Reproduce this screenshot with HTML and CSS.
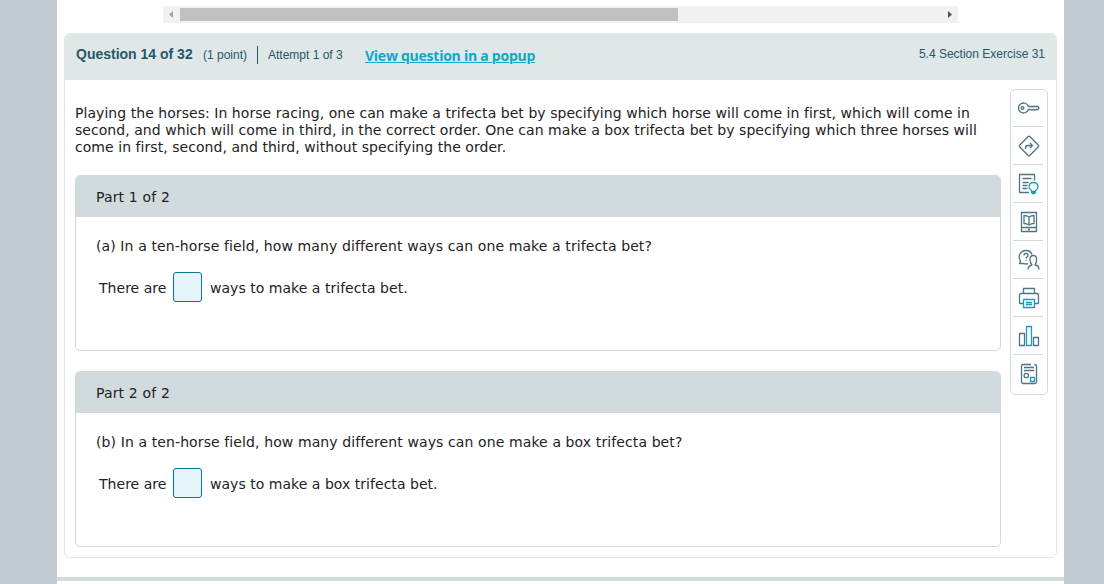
FILE: index.html
```html
<!DOCTYPE html>
<html lang="en">
    <head>
        <meta charset="UTF-8" />
        <meta name="viewport" content="width=device-width, initial-scale=1.0" />
        <title>Question 14 of 32</title>
        <link rel="stylesheet" href="styles.css">
    </head>
    <body>
        <main class="page">
            <div class="scrollbar">
                <svg class="arrow" width="17" height="17" viewBox="0 0 17 17"><path d="M10 5v7L6 8.500z" fill="#a3a3a3"/></svg>
                <div class="thumb"></div>
                <svg class="arrow arrow-right" width="17" height="17" viewBox="0 0 17 17"><path d="M7 5v7l4-3.500z" fill="#505050"/></svg>
            </div>
            <section class="question">
                <header class="question-header">
                    <h1 class="question-title">Question 14 of 32</h1>
                    <span class="points">(1 point)</span>
                    <span class="attempt">Attempt 1 of 3</span>
                    <a class="popup-link" href="#">View question in a popup</a>
                    <span class="exercise">5.4 Section Exercise 31</span>
                </header>
                <div class="question-body">
                    <div class="content">
                        <p class="intro">
                            Playing the horses: In horse racing, one can make a trifecta bet by specifying which horse will come in first, which will come in<br>
                            second, and which will come in third, in the correct order. One can make a box trifecta bet by specifying which three horses will<br>
                            come in first, second, and third, without specifying the order.
                        </p>
                        <section class="part">
                            <h2 class="part-title">Part 1 of 2</h2>
                            <p class="part-question">(a) In a ten-horse field, how many different ways can one make a trifecta bet?</p>
                            <div class="answer">
                                <label for="answer-a">There are</label>
                                <input class="answer-input" id="answer-a" type="text">
                                <span>ways to make a trifecta bet.</span>
                            </div>
                        </section>
                        <section class="part">
                            <h2 class="part-title">Part 2 of 2</h2>
                            <p class="part-question">(b) In a ten-horse field, how many different ways can one make a box trifecta bet?</p>
                            <div class="answer">
                                <label for="answer-b">There are</label>
                                <input class="answer-input" id="answer-b" type="text">
                                <span>ways to make a box trifecta bet.</span>
                            </div>
                        </section>
                    </div>
                    <nav class="tools">
                        <a class="tool" href="#">
                            <svg class="icon" viewBox="0 0 22 22"><path d="M10.300 9.500a5 5 0 1 0 0 3H13l1 .8 1-.8h1l1 .8 1-.8h2q1.500-1.500 0-3z"/><circle cx="4.500" cy="11" r="1.300"/></svg>
                        </a>
                        <a class="tool" href="#">
                            <svg class="icon" viewBox="0 0 22 22"><path d="M10 1.800q1-1 2 0l8.200 8.200q1 1 0 2L12 20.200q-1 1-2 0L1.800 12q-1-1 0-2z"/><path d="M7.500 14v-1q0-2.500 2.500-2.500h4.500M12 8l2.500 2.500L12 13"/></svg>
                        </a>
                        <a class="tool" href="#">
                            <svg class="icon" viewBox="0 0 22 22"><path d="M16.500 7.500V2q0-.5-.5-.5H2q-.5 0-.5.5v17q0 .5.5.5h9M4.500 5.500h9M4.500 9.500h6M4.500 12.500h5M4.500 15.500h5"/><path class="accent" d="M13.500 17.500q-2.500-1.500-2.500-4 .5-4 4.500-4t4.500 4q0 2.500-2.500 4v2h-4zM13.500 18.500h4M14 20.500h3"/></svg>
                        </a>
                        <a class="tool" href="#">
                            <svg class="icon" viewBox="0 0 22 22"><path d="M3.500 1.500h15v19h-15zM3.500 16.500h15M10 18.500h2M11 6Q9 4.500 6 4.500v8q3 0 5 1.500 2-1.500 5-1.500v-8q-3 0-5 1.500zM11 6v8"/></svg>
                        </a>
                        <a class="tool" href="#">
                            <svg class="icon" viewBox="0 0 22 22"><path d="M10 14.500q-2 1-4.500 0h-4l1-2.500Q.500 9.500 1.500 6q2-4.500 6.500-4.500t6 4"/><path d="M6 6.500q0-2 2-2t2 2q0 1-1 1.500t-1 1.500M8 11v1"/><path d="M10 20.500q0-3.500 4-4.500-2-2.500-2-5.500 0-4 3.300-4t3.300 4q0 3-1.600 5.500 4 .5 4 4.500"/></svg>
                        </a>
                        <a class="tool" href="#">
                            <svg class="icon" viewBox="0 0 22 22"><path d="M5.500 6.500v-5h11v5M5 16.500H2q-.5 0-.5-.5V8q0-1.500 1.500-1.500h16q1.500 0 1.500 1.500v8q0 .5-.5.5h-3"/><path class="accent" d="M5.500 12.500h11v8h-11zM8 15.500h6M8 17.500h6"/></svg>
                        </a>
                        <a class="tool" href="#">
                            <svg class="icon" viewBox="0 0 22 22"><path d="M1.500 8.500h5v12h-5zM15.500 12.500h5v8h-5z"/><path class="accent" d="M8.500 1.500h5v19h-5z"/></svg>
                        </a>
                        <a class="tool" href="#">
                            <svg class="icon" viewBox="0 0 22 22"><path d="M13 1.500H5q-1.500 0-1.500 1.500v16q0 1.500 1.500 1.500h12q1.500 0 1.500-1.500V3q0-1.500-2-1.500M6 4.500h10M6 7.500h10"/><circle cx="8.300" cy="12.500" r="2.200"/><path class="accent" d="M12.500 14.500h4v4h-4z"/></svg>
                        </a>
                    </nav>
                </div>
            </section>
            <div class="page-divider"></div>
        </main>
    </body>
</html>
```
FILE: styles.css
```css
* {
    margin: 0;
    padding: 0;
    box-sizing: border-box;
}
body {
    height: 584px;
    overflow: hidden;
    background: #c1cdd3;
    color: #222;
    font-family: Verdana, "DejaVu Sans", sans-serif;
    font-size: 14px;
    line-height: 17px;
}
.page {
    width: 1007px;
    height: 584px;
    margin-left: 57px;
    padding-top: 6px;
    background: #fff;
}
.scrollbar {
    display: flex;
    align-items: center;
    width: 795px;
    height: 17px;
    margin-left: 106px;
    background: #f1f1f1;
}
.thumb {
    width: 498px;
    height: 13px;
    background: #c1c1c1;
}
.arrow-right {
    margin-left: auto;
}
.question {
    width: 993px;
    height: 525px;
    margin: 10px 0 0 7px;
    border: 1px solid #dfe7e8;
    border-radius: 6px;
    overflow: hidden;
}
.question-header {
    display: flex;
    height: 46px;
    padding: 12px 11px 0;
    background: #dfe7e8;
    color: #265766;
    font-family: Arial, "Liberation Sans", sans-serif;
    font-size: 12px;
    line-height: 18px;
    white-space: nowrap;
}
.question-title {
    width: 127px;
    font-size: 14px;
    line-height: 17px;
}
.points {
    width: 55px;
    height: 18px;
    border-right: 1px solid #265766;
}
.attempt {
    width: 97px;
    padding-left: 10px;
}
.popup-link {
    margin-left: 10px;
    color: #0ea8c6;
    font-family: "Open Sans", sans-serif;
    font-size: 14px;
    font-weight: 700;
    line-height: 20px;
    letter-spacing: -0.25px;
}
.exercise {
    margin-left: auto;
    line-height: 16px;
}
.question-body {
    display: flex;
    gap: 9px;
    padding: 9px 8px 0 10px;
}
.content {
    width: 926px;
    padding-top: 16px;
}
.intro {
    margin-bottom: 19px;
    letter-spacing: 0.049px;
    white-space: nowrap;
}
.part {
    height: 176px;
    margin-bottom: 20px;
    border: 1px solid #d1dadc;
    border-radius: 5px;
    overflow: hidden;
}
.part-title {
    height: 41px;
    padding-left: 20px;
    background: #d1dadc;
    font-size: 14px;
    font-weight: 400;
    line-height: 42px;
    letter-spacing: 0.15px;
}
.part-question {
    padding: 21px 0 0 20px;
    letter-spacing: 0.105px;
}
.answer {
    display: flex;
    align-items: center;
    height: 30px;
    margin: 17px 0 0 23px;
    line-height: 19px;
    letter-spacing: 0.03px;
}
.answer label {
    width: 74px;
}
.answer label,
.answer span {
    padding-top: 2px;
}
.answer-input {
    width: 29px;
    height: 30px;
    margin-right: 8px;
    border: 1px solid #007c92;
    border-radius: 3px;
    background: #e5f4f9;
}
.tools {
    width: 38px;
    height: 306px;
    padding: 0 4px 0 2px;
    border: 1px solid #d1dadc;
    border-radius: 5px;
}
.tool {
    display: flex;
    align-items: center;
    justify-content: center;
    height: 38px;
    padding-left: 2px;
    border-bottom: 1px solid #d1dadc;
}
.tool:first-child {
    height: 37px;
}
.tool:last-child {
    border-bottom: none;
}
.icon {
    width: 22px;
    height: 22px;
    fill: none;
    stroke: #4d7582;
    stroke-width: 1.3;
    stroke-linejoin: round;
}
.accent {
    stroke: #159fbb;
}
.page-divider {
    height: 4px;
    margin-top: 19px;
    background: #d1dadc;
}
```
